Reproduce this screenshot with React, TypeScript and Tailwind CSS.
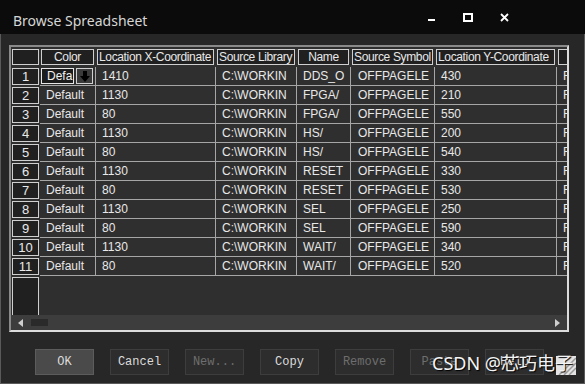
const cols = [
  { key: "color", title: "Color", w: 56, center: true },
  { key: "x", title: "Location X-Coordinate", w: 120 },
  { key: "lib", title: "Source Library", w: 81 },
  { key: "name", title: "Name", w: 54, center: true },
  { key: "sym", title: "Source Symbol", w: 84 },
  { key: "y", title: "Location Y-Coordinate", w: 122 },
  { key: "more", title: "", w: 30 },
];

const rows = [
  ["Default", "1410", "C:\\WORKIN", "DDS_O", "OFFPAGELE", "430", "F"],
  ["Default", "1130", "C:\\WORKIN", "FPGA/", "OFFPAGELE", "210", "F"],
  ["Default", "80", "C:\\WORKIN", "FPGA/", "OFFPAGELE", "550", "F"],
  ["Default", "1130", "C:\\WORKIN", "HS/", "OFFPAGELE", "200", "F"],
  ["Default", "80", "C:\\WORKIN", "HS/", "OFFPAGELE", "540", "F"],
  ["Default", "1130", "C:\\WORKIN", "RESET", "OFFPAGELE", "330", "F"],
  ["Default", "80", "C:\\WORKIN", "RESET", "OFFPAGELE", "530", "F"],
  ["Default", "1130", "C:\\WORKIN", "SEL", "OFFPAGELE", "250", "F"],
  ["Default", "80", "C:\\WORKIN", "SEL", "OFFPAGELE", "590", "F"],
  ["Default", "1130", "C:\\WORKIN", "WAIT/", "OFFPAGELE", "340", "F"],
  ["Default", "80", "C:\\WORKIN", "WAIT/", "OFFPAGELE", "520", "F"],
];

const buttons = [
  { label: "OK", on: true, primary: true },
  { label: "Cancel", on: true },
  { label: "New...", on: false },
  { label: "Copy", on: true },
  { label: "Remove", on: false },
  { label: "Paste", on: false },
  { label: "Help", on: true },
];

// row 1 colour cell is in edit mode: text box + dropdown button
function ColorEditor() {
  return (
    <div className="flex h-full items-start gap-[2px] pl-[1px] pt-[1px]">
      <div className="h-[16px] w-[33px] shrink-0 overflow-hidden border border-[#e6e6e6] bg-[#1c1c1c] pl-[5px] leading-[14px] text-[#f2f2f2]">
        Defa
      </div>
      <div className="flex h-[16px] w-[17px] shrink-0 items-center justify-center border border-[#d0d0d0] bg-[#3a3a3a]">
        <svg width="10" height="11" viewBox="0 0 10 11">
          <rect x="3" y="0" width="4" height="5" fill="#000" />
          <path d="M0 5 H10 L5 11 Z" fill="#000" />
        </svg>
      </div>
    </div>
  );
}

export default function App() {
  return (
    <div
      className="relative h-[384px] w-[585px] overflow-hidden bg-[#272727] text-[12px] text-[#e8e8e8]"
      style={{ fontFamily: '"Liberation Sans", Arial, sans-serif' }}
    >
      {/* title bar */}
      <div className="flex h-[34px] items-center bg-[#0b0b0b] pl-[13px]">
        <span
          className="mt-[6px] text-[14px] text-[#d6d6d6]"
          style={{ fontFamily: '"Noto Sans", "Open Sans", sans-serif' }}
        >
          Browse Spreadsheet
        </span>
        <div className="ml-auto flex items-center">
          <div className="mr-[28px] mt-[6px] h-[2px] w-[7px] bg-white" />
          <div className="mr-[27px] h-[9px] w-[10px] border-2 border-white" />
          <svg width="9" height="9" viewBox="0 0 9 9" className="mr-[76px]">
            <path d="M1 1 L8 8 M8 1 L1 8" stroke="#fff" strokeWidth="1.8" />
          </svg>
        </div>
      </div>

      <div className="flex h-[350px] flex-col border-x border-b border-[#5a5a5a]">
        {/* grid frame */}
        <div className="ml-[8px] mt-[11px] flex h-[287px] w-[560px] flex-col border-2 border-b-[#dcdcdc] border-l-[#8a8a8a] border-r-[#dcdcdc] border-t-[#8a8a8a] bg-[#2f2f2f]">
          <div className="flex h-[268px] flex-col overflow-hidden">
            {/* header */}
            <div className="flex h-[20px] shrink-0">
              <div className="w-[29px] shrink-0 pl-[1px] pt-[2px]">
                <div className="h-[16px] w-[27px] border border-[#cfcfcf] bg-[#202020]" />
              </div>
              {cols.map((c) => (
                <div key={c.key} className="shrink-0 pl-[1px] pr-[2px] pt-[2px]" style={{ width: c.w }}>
                  <div
                    className={`h-[16px] overflow-hidden whitespace-nowrap border border-[#cfcfcf] bg-[#202020] leading-[14px] tracking-[-0.35px] ${
                      c.center ? "text-center" : "pl-[1px]"
                    }`}
                  >
                    {c.title}
                  </div>
                </div>
              ))}
            </div>
            {/* data rows */}
            {rows.map((r, i) => (
              <div key={i} className="flex h-[19px] shrink-0">
                <div className="w-[29px] shrink-0 pl-[1px] pt-[1px]">
                  <div className="h-[17px] w-[27px] border border-[#cfcfcf] bg-[#202020] text-center text-[13px] leading-[15px]">
                    {i + 1}
                  </div>
                </div>
                {cols.map((c, j) => {
                  const editing = i === 0 && j === 0;
                  return (
                    <div
                      key={c.key}
                      className={`shrink-0 overflow-hidden whitespace-nowrap border-b border-r border-[#a6a6a6] leading-[18px] ${
                        editing ? "pl-0" : j === 4 ? "pl-[7px]" : "pl-[6px]"
                      }`}
                      style={{ width: c.w }}
                    >
                      {editing ? <ColorEditor /> : r[j]}
                    </div>
                  );
                })}
              </div>
            ))}
            {/* empty space under the rows */}
            <div className="flex flex-1">
              <div className="w-[29px] shrink-0 pl-[1px] pt-[1px]">
                <div className="h-full w-[27px] border-x border-t border-[#cfcfcf] bg-[#202020]" />
              </div>
            </div>
          </div>
          {/* horizontal scrollbar */}
          <div className="flex h-[15px] shrink-0 items-center bg-[#3d3d3d] px-[7px]">
            <svg width="5" height="8" viewBox="0 0 5 8">
              <path d="M5 0 V8 L0 4 Z" fill="#cfcfcf" />
            </svg>
            <div className="ml-[8px] h-[7px] w-[17px] bg-[#2a2a2a]" />
            <svg width="5" height="8" viewBox="0 0 5 8" className="ml-auto">
              <path d="M0 0 V8 L5 4 Z" fill="#cfcfcf" />
            </svg>
          </div>
        </div>

        {/* buttons */}
        <div
          className="ml-[34px] mt-[17px] flex gap-[16px]"
          style={{ fontFamily: '"Liberation Mono", "Courier New", monospace' }}
        >
          {buttons.map((b) => (
            <div
              key={b.label}
              className={`flex h-[26px] w-[59px] items-center justify-center border text-[12px] ${
                b.primary ? "border-[#5c5c5c] bg-[#4a4a4a]" : "border-[#3d3d3d] bg-[#2d2d2d]"
              } ${b.on ? "text-[#dcdcdc]" : "text-[#6e6e6e]"}`}
            >
              {b.label}
            </div>
          ))}
        </div>
      </div>

      {/* watermark */}
      <svg width="20" height="19" viewBox="0 0 20 19" className="absolute left-[556px] top-[356px]">
        <rect width="20" height="19" fill="#e4e4e4" />
        <path d="M8 19 L20 7 M13 19 L20 12 M3 19 L20 2" stroke="#9a9a9a" strokeWidth="1.5" />
      </svg>
      <div
        className="absolute left-[432px] top-[350px] whitespace-nowrap text-[18px] text-[#f4f4f4]"
        style={{
          fontFamily: '"Noto Sans", "Noto Sans CJK SC", sans-serif',
          textShadow: "1px 1px 1px #000",
        }}
      >
        CSDN @芯巧电子
      </div>
    </div>
  );
}
